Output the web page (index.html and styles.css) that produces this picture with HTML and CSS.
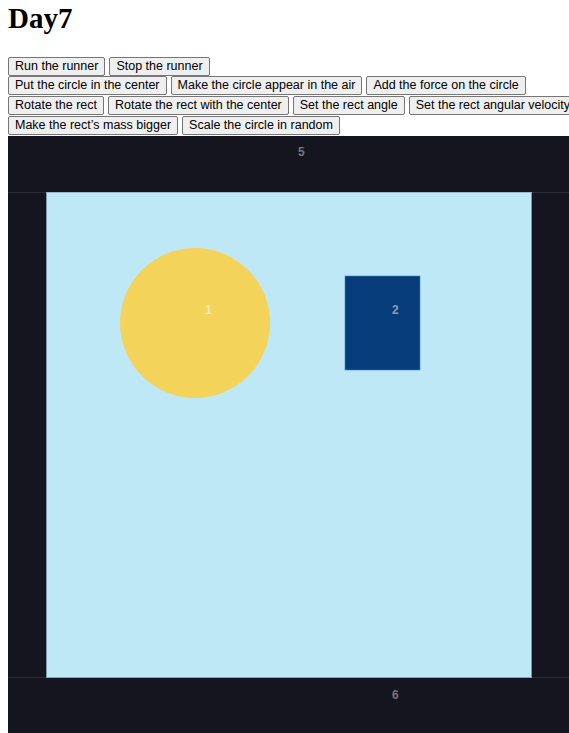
FILE: index.html
```html
<!DOCTYPE html>
<html>
<head>
<meta charset="utf-8">
<title>Day7</title>
<link rel="stylesheet" href="styles.css">
</head>
<body>
<h1 class="title">Day7</h1>
<div class="row"><button>Run the runner</button> <button>Stop the runner</button></div>
<div class="row"><button>Put the circle in the center</button> <button>Make the circle appear in the air</button> <button>Add the force on the circle</button></div>
<div class="row"><button>Rotate the rect</button> <button>Rotate the rect with the center</button> <button>Set the rect angle</button> <button>Set the rect angular velocity</button></div>
<div class="row"><button>Make the rect’s mass bigger</button> <button>Scale the circle in random</button></div>
<div class="stage">
<svg class="world" width="800" height="600" viewBox="0 0 800 600" xmlns="http://www.w3.org/2000/svg">
  <rect x="0" y="0" width="800" height="600" fill="#14151f"/>
  <rect x="38" y="56" width="486" height="486" fill="#bee8f5"/>
  <line x1="0" y1="56.5" x2="800" y2="56.5" stroke="#2b2c37" stroke-width="1"/>
  <line x1="0" y1="541.5" x2="800" y2="541.5" stroke="#2b2c37" stroke-width="1"/>
  <line x1="38.5" y1="56" x2="38.5" y2="542" stroke="#7d98a4" stroke-width="1"/>
  <line x1="523.5" y1="56" x2="523.5" y2="542" stroke="#7d98a4" stroke-width="1"/>
  <line x1="38" y1="541.5" x2="524" y2="541.5" stroke="#8aa5b0" stroke-width="1"/>
  <line x1="38" y1="56.5" x2="524" y2="56.5" stroke="#9bb8c3" stroke-width="1"/>
  <circle cx="187" cy="187" r="75" fill="#f4d35b"/>
  <rect x="337" y="140" width="75" height="94" fill="#063c7a" stroke="#4a80b2" stroke-width="0.6"/>
  <text class="lbl" x="197" y="178">1</text>
  <text class="lbl" x="384" y="178">2</text>
  <text class="lbl strong" x="290" y="20">5</text>
  <text class="lbl strong" x="384" y="563">6</text>
</svg>
</div>
</body>
</html>
```
FILE: styles.css
```css
html {
  overflow: hidden;
}
body {
  margin: 0 0 0 8px;
  font-family: "Liberation Serif", "Times New Roman", serif;
}
.title {
  margin: 0 0 21.7px 0;
  padding-top: 2px;
  font-size: 29px;
  font-family: "Liberation Serif", serif;
}
.row {
  white-space: nowrap;
  height: 19.75px;
}
.row button {
  font-family: "Liberation Sans", Arial, sans-serif;
  font-size: 12.5px;
  background: #efefef;
  border: 1px solid #767676;
  border-radius: 2px;
  padding: 1px 6px;
  margin: 0;
  color: #000;
  height: 19px;
  line-height: 15px;
  vertical-align: top;
}
.stage {
  overflow: hidden;
  height: 597px;
}
.world {
  display: block;
}
.lbl {
  font-family: "Liberation Sans", Arial, sans-serif;
  font-size: 12px;
  font-weight: bold;
  fill: rgba(255, 255, 255, 0.5);
}
.strong {
  fill: rgba(255, 255, 255, 0.42);
}
```
